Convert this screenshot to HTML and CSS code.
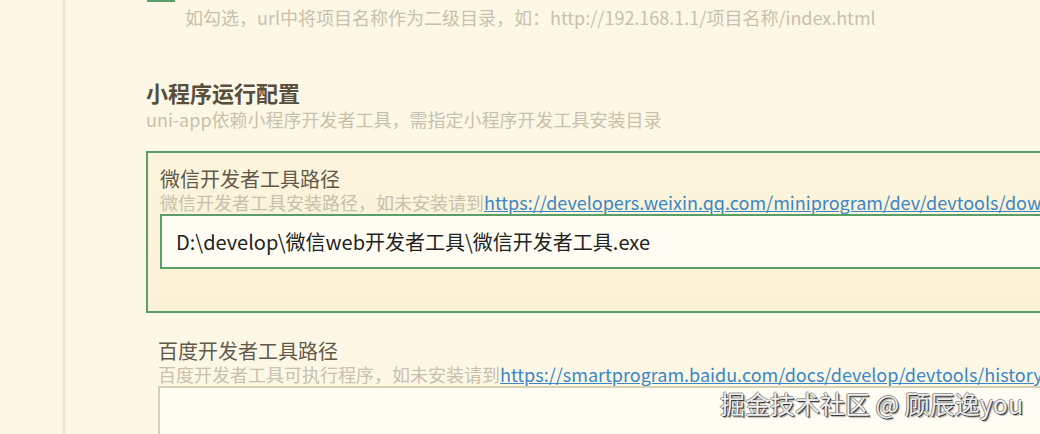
FILE: index.html
```html
<!DOCTYPE html>
<html lang="zh-CN">
<head>
  <meta charset="UTF-8">
  <title>运行配置</title>
  <link rel="stylesheet" href="styles.css">
</head>
<body>

  <div class="page">
    <aside class="side"></aside>

    <main class="settings">
      <div class="option">
        <span class="checkbox"></span>
        <p class="option-hint">如勾选，url中将项目名称作为二级目录，如：http://192.168.1.1/项目名称/index.html</p>
      </div>

      <section class="group">
        <h2>小程序运行配置</h2>
        <p class="group-desc">uni-app依赖小程序开发者工具，需指定小程序开发工具安装目录</p>

        <div class="field active">
          <label class="field-title">微信开发者工具路径</label>
          <p class="field-desc">微信开发者工具安装路径，如未安装请到<a href="#">https://developers.weixin.qq.com/miniprogram/dev/devtools/download.html</a></p>
          <input class="field-input" type="text" value="D:\develop\微信web开发者工具\微信开发者工具.exe">
        </div>

        <div class="field">
          <label class="field-title">百度开发者工具路径</label>
          <p class="field-desc">百度开发者工具可执行程序，如未安装请到<a href="#">https://smartprogram.baidu.com/docs/develop/devtools/history/</a></p>
          <input class="field-input" type="text" value="">
        </div>
      </section>
    </main>
  </div>

  <div class="watermark">掘金技术社区 @ 顾辰逸you</div>

</body>
</html>
```

FILE: styles.css
```css
:root {
  --bg-color: #fdf8e6;
  --line-color: #ece5cf;
  --green: #5a9f69;
  --tan: #d9d1b2;
  --title-color: #574e3e;
  --label-color: #615a4c;
  --hint-color: #c8c1ac;
  --link-color: #3a86c6;
}

html, body {
  margin: 0;
  padding: 0;
  height: 100%;
  overflow: hidden;
}

body {
  font-family: "Noto Sans CJK SC", "Noto Sans", sans-serif;
  background-color: var(--bg-color);
  color: var(--label-color);
}

.page {
  display: flex;
  height: 100%;
}

.side {
  flex: 0 0 63px;
  border-right: 2px solid var(--line-color);
}

.settings {
  flex: 1;
  min-width: 0;
  margin-top: -26px;
  padding-left: 81px;
}

.option {
  display: flex;
  flex-direction: column;
}

.checkbox {
  display: block;
  width: 28px;
  height: 28px;
  margin-left: 1px;
  background-color: var(--green);
}

.option-hint {
  margin: 3px 0 0 39px;
  font-size: 18px;
  line-height: 24px;
  color: var(--hint-color);
  white-space: nowrap;
}

.group h2 {
  margin: 48px 0 0;
  font-size: 22px;
  line-height: 30px;
  font-weight: bold;
  color: var(--title-color);
}

.group-desc {
  margin: 0;
  font-size: 18px;
  line-height: 24px;
  color: var(--hint-color);
  white-space: nowrap;
}

.field {
  width: 1100px;
  padding-left: 12px;
  margin-top: 26px;
}

.field.active {
  margin-top: 20px;
  padding: 14px 12px 42px;
  border: 2px solid var(--green);
  background: linear-gradient(180deg, #fcf5dc 0%, #fbf1d6 100%);
}

.field-title {
  display: block;
  font-size: 20px;
  line-height: 24px;
  color: var(--label-color);
}

.field-desc {
  margin: 0;
  font-size: 18px;
  line-height: 22px;
  color: var(--hint-color);
  white-space: nowrap;
}

.field-desc a {
  color: var(--link-color);
}

.field-input {
  display: block;
  box-sizing: border-box;
  width: 100%;
  height: 55px;
  margin-top: 1px;
  padding: 0 14px;
  border: 2px solid var(--tan);
  background-color: #fffdf3;
  font-family: inherit;
  font-size: 20px;
  color: #222;
  outline: none;
}

.field.active .field-input {
  border-color: var(--green);
}

.watermark {
  position: absolute;
  left: 720px;
  top: 386px;
  font-family: "Noto Sans CJK SC", sans-serif;
  font-size: 25px;
  line-height: 34px;
  color: #eeeeee;
  text-shadow: 1px 1px 0 #3c3c3c, -1px 0 0 #8a8a8a, 0 -1px 0 #9a9a9a, 2px 2px 1px rgba(0, 0, 0, 0.3);
}
```
